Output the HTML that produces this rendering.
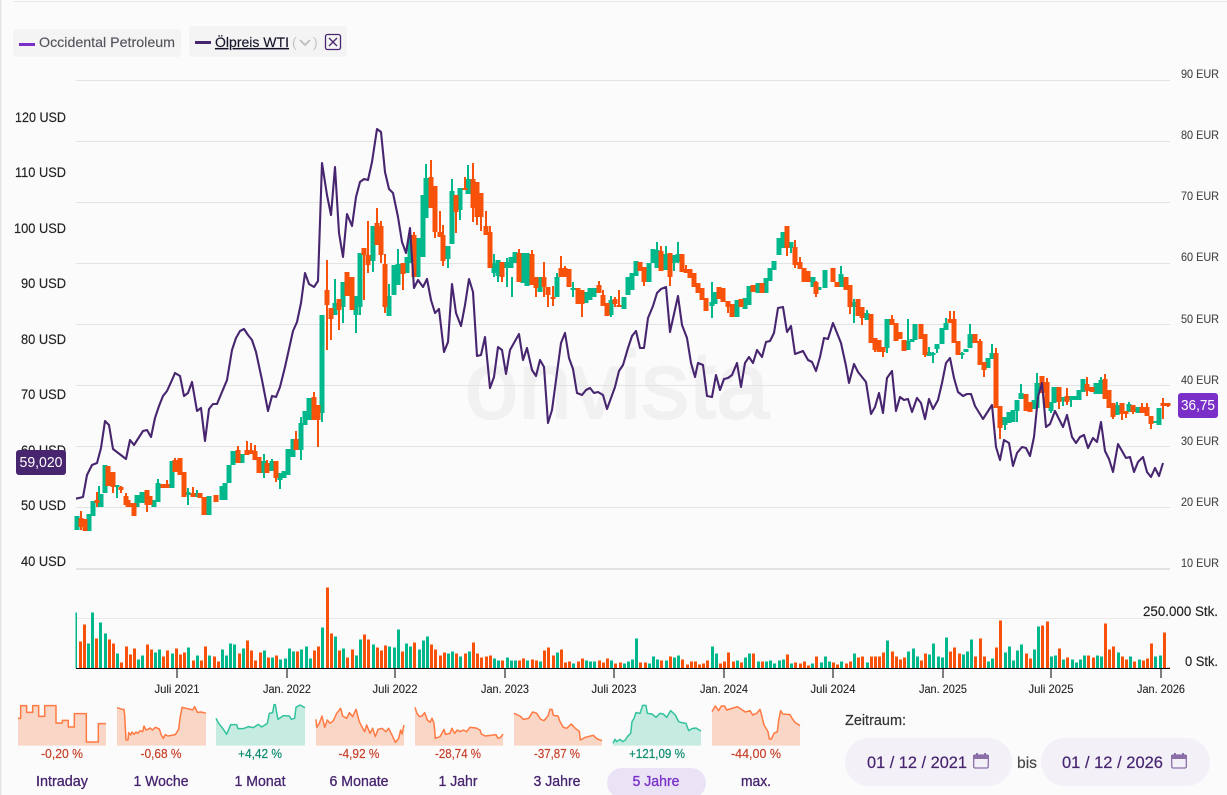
<!DOCTYPE html>
<html lang="de"><head><meta charset="utf-8"><title>Occidental Petroleum Chart</title>
<style>
html,body{margin:0;padding:0;background:#fbfbfb;width:1227px;height:795px;overflow:hidden}
svg{display:block;position:absolute;left:0;top:0}
text{font-family:"Liberation Sans",sans-serif}
.l{font-size:14px;fill:#222;stroke:#222;stroke-width:.15;text-anchor:end}
.r{font-size:12px;fill:#444;stroke:#444;stroke-width:.1}
.d{font-size:12px;fill:#222;stroke:#222;stroke-width:.1;text-anchor:middle}
.p{font-size:12.5px;text-anchor:middle;stroke-width:.2}
.n{font-size:14.5px;fill:#47256f;stroke:#47256f;stroke-width:.3;text-anchor:middle}
</style></head><body>
<svg width="1227" height="795" viewBox="0 0 1227 795" xmlns="http://www.w3.org/2000/svg">
<rect x="0" y="0" width="1227" height="795" fill="#fbfbfb"/>
<rect x="0" y="0" width="1.5" height="795" fill="#e4e4e4"/>
<rect x="13" y="1" width="1214" height="1" fill="#e8e8e8"/>

<!-- watermark -->
<text x="465" y="418" font-size="96" fill="#f1f1f1" stroke="#f1f1f1" stroke-width="2">onvista</text>

<!-- grid -->
<g fill="#e3e3e3">
<rect x="76" y="80" width="1094" height="1"/><rect x="76" y="141" width="1094" height="1"/><rect x="76" y="202" width="1094" height="1"/><rect x="76" y="263" width="1094" height="1"/><rect x="76" y="324" width="1094" height="1"/><rect x="76" y="385" width="1094" height="1"/><rect x="76" y="446" width="1094" height="1"/><rect x="76" y="507" width="1094" height="1"/><rect x="76" y="568" width="1094" height="2"/>
<rect x="76" y="618" width="1094" height="1" fill="#e8e8e8"/>
</g>

<!-- legend -->
<rect x="13" y="29" width="168" height="28" rx="3" fill="#f4f4f4"/>
<rect x="19" y="43" width="16" height="3" fill="#7a30c8"/>
<text x="39" y="47" font-size="14" fill="#55555f" stroke="#55555f" stroke-width=".15" textLength="136" lengthAdjust="spacingAndGlyphs">Occidental Petroleum</text>
<rect x="189" y="26" width="158" height="31" rx="3" fill="#f4f4f4"/>
<rect x="195" y="41" width="16" height="3" fill="#47256f"/>
<text x="215" y="47" font-size="14" fill="#14142a" stroke="#14142a" stroke-width=".15" text-decoration="underline" textLength="74" lengthAdjust="spacingAndGlyphs">Ölpreis WTI</text>
<text x="292" y="47" font-size="14" fill="#c4c4c4">(</text>
<path d="M300 40l5 5 5-5" fill="none" stroke="#bdbdbd" stroke-width="1.8"/>
<text x="313" y="47" font-size="14" fill="#c4c4c4">)</text>
<rect x="325.5" y="34.5" width="15" height="15" rx="2" fill="none" stroke="#47256f" stroke-width="1.3"/>
<path d="M329 38l8 8M337 38l-8 8" fill="none" stroke="#47256f" stroke-width="1.3"/>

<!-- y axis left -->
<text class="l" x="66" y="122" textLength="51" lengthAdjust="spacingAndGlyphs">120 USD</text>
<text class="l" x="66" y="177" textLength="51" lengthAdjust="spacingAndGlyphs">110 USD</text>
<text class="l" x="66" y="233" textLength="52" lengthAdjust="spacingAndGlyphs">100 USD</text>
<text class="l" x="66" y="288" textLength="45" lengthAdjust="spacingAndGlyphs">90 USD</text>
<text class="l" x="66" y="344" textLength="45" lengthAdjust="spacingAndGlyphs">80 USD</text>
<text class="l" x="66" y="399" textLength="45" lengthAdjust="spacingAndGlyphs">70 USD</text>
<text class="l" x="66" y="455" textLength="45" lengthAdjust="spacingAndGlyphs">60 USD</text>
<text class="l" x="66" y="510" textLength="45" lengthAdjust="spacingAndGlyphs">50 USD</text>
<text class="l" x="66" y="566" textLength="45" lengthAdjust="spacingAndGlyphs">40 USD</text>

<!-- y axis right -->
<text class="r" x="1181" y="78" textLength="38" lengthAdjust="spacingAndGlyphs">90 EUR</text>
<text class="r" x="1181" y="139" textLength="38" lengthAdjust="spacingAndGlyphs">80 EUR</text>
<text class="r" x="1181" y="200" textLength="38" lengthAdjust="spacingAndGlyphs">70 EUR</text>
<text class="r" x="1181" y="261" textLength="38" lengthAdjust="spacingAndGlyphs">60 EUR</text>
<text class="r" x="1181" y="323" textLength="38" lengthAdjust="spacingAndGlyphs">50 EUR</text>
<text class="r" x="1181" y="384" textLength="38" lengthAdjust="spacingAndGlyphs">40 EUR</text>
<text class="r" x="1181" y="445" textLength="38" lengthAdjust="spacingAndGlyphs">30 EUR</text>
<text class="r" x="1181" y="506" textLength="38" lengthAdjust="spacingAndGlyphs">20 EUR</text>
<text class="r" x="1181" y="567" textLength="38" lengthAdjust="spacingAndGlyphs">10 EUR</text>

<!-- green candles -->
<g fill="none" stroke="#00b88c" shape-rendering="crispEdges">
<path stroke-width="2" d="M99 486V507M117 485V498M158 479V502M188 488V505M197 490V497M264 454V478M272 459V471M280 473V489M301 417V460M322 315V422M335 279V315M343 282V323M356 296V333M360 253V315M373 226V272M389 284V316M398 249V285M426 164V218M448 246V268M452 179V244M460 188V220M468 165V194M494 254V277M498 260V282M507 258V287M512 277V297M557 273V297M573 282V297M611 296V317M657 242V268M666 246V270M674 255V271M678 242V263M712 282V318M791 242V253M841 266V287M854 299V323M867 310V320M887 319V353M908 319V350M929 347V356M933 352V363M937 344V353M946 318V330M962 352V359M970 324V348M992 344V359M1005 417V430M1017 400V422M1021 384V399M1037 373V408M1051 402V413M1063 397V406M1071 396V407M1101 377V394M1117 402V415M1129 402V412"/>
<path stroke-width="5" d="M77 516V530M89 514V531M93 501V516M101 494V507M105 465V493M117 485V487M137 495V507M142 492V503M154 500V507M158 483V502M172 461V488M188 492V495M197 493V497M209 496V515M222 486V500M225 483V500M229 465V483M233 451V465M242 454V463M264 461V473M272 461V471M280 473V480M284 471V478M288 449V475M293 439V457M301 423V450M305 411V425M309 398V420M322 315V413M335 303V315M343 282V307M356 296V315M360 253V307M373 226V261M389 296V316M394 265V295M398 264V285M407 257V273M410 236V263M418 238V277M423 195V257M426 178V218M448 246V259M452 191V244M460 188V210M468 179V194M494 263V273M498 260V276M507 262V268M511 257V268M515 252V263M523 253V283M527 253V286M540 277V292M557 277V297M573 288V290M586 292V303M590 288V300M594 288V297M611 300V315M624 297V309M628 277V295M632 273V290M636 261V276M649 263V282M653 249V263M657 250V268M666 254V270M674 255V263M678 254V262M712 302V306M715 292V304M737 300V317M745 298V309M749 286V305M758 283V293M766 278V293M770 268V281M774 261V270M779 238V255M783 232V248M791 242V248M813 277V287M819 287V290M825 270V288M841 274V287M854 302V307M867 313V320M887 319V348M908 341V350M912 339V342M915 324V340M929 352V356M933 353V355M937 344V349M942 328V344M946 323V330M962 353V355M966 349V352M970 334V348M988 358V368M992 353V359M1005 417V425M1009 412V423M1013 410V422M1017 400V411M1021 393V399M1034 400V409M1037 383V408M1051 402V411M1054 387V403M1063 397V401M1071 396V400M1075 396V400M1079 390V400M1083 379V392M1096 383V394M1101 380V394M1117 405V415M1129 404V412M1138 407V413M1155 421V423M1159 408V425"/>
</g>

<!-- orange candles -->
<g fill="none" stroke="#f8520a" shape-rendering="crispEdges">
<path stroke-width="2" d="M81 511V530M97 492V507M113 472V493M121 486V493M126 493V505M147 490V512M167 480V488M175 458V472M193 487V497M238 446V463M247 441V455M251 443V454M255 445V460M267 460V473M276 461V482M296 431V450M314 392V420M318 405V447M327 260V350M331 308V340M339 299V330M364 248V300M368 221V273M377 208V245M381 221V263M385 254V313M403 263V290M414 232V277M431 160V208M435 186V238M440 211V237M443 225V266M456 195V233M465 177V190M473 163V222M477 182V225M481 193V231M486 211V235M490 226V268M502 262V282M519 249V282M532 250V285M536 277V297M544 262V297M548 287V307M553 286V306M561 256V277M565 266V277M582 290V317M599 281V293M603 290V306M615 297V307M619 290V307M640 262V271M644 267V286M661 246V271M670 253V286M686 265V273M728 301V313M787 226V256M795 240V268M800 257V269M816 281V297M850 285V314M862 307V325M875 338V352M883 347V357M892 315V325M921 324V339M925 334V357M950 311V323M954 311V343M980 339V365M984 362V377M996 348V408M1000 406V439M1047 378V408M1059 387V409M1067 388V405M1087 377V396M1105 374V399M1113 403V419M1122 403V420M1126 411V418M1133 405V414M1142 403V413M1147 403V416M1151 416V429M1163 398V419M1168 403V407"/>
<path stroke-width="5" d="M81 518V527M85 519V531M97 500V503M108 466V486M113 472V487M121 487V490M126 496V505M128 500V507M132 503V507M134 503V516M147 490V505M150 496V505M163 484V488M167 484V488M175 460V472M180 458V475M184 472V497M193 493V497M200 493V498M204 497V515M216 495V502M238 450V463M247 450V455M251 450V454M255 451V460M259 457V473M267 463V473M276 461V478M296 439V450M314 397V420M318 405V420M327 290V305M331 308V319M339 299V310M347 272V296M352 277V310M364 248V255M368 255V265M377 223V245M381 226V255M385 264V307M403 263V274M414 235V277M431 177V208M435 186V232M440 232V237M443 235V261M456 195V212M465 188V190M473 179V208M477 182V217M481 193V217M486 226V235M490 232V268M502 262V277M519 253V282M532 254V285M536 277V288M544 277V287M548 287V295M553 297V299M561 268V277M565 268V277M569 269V287M578 288V304M582 290V304M599 285V293M603 295V306M607 303V316M615 299V304M619 305V307M640 262V271M644 267V282M661 251V271M670 253V277M682 254V272M686 269V273M690 269V278M694 273V287M698 283V293M702 288V300M706 298V311M719 287V299M723 288V302M728 301V307M732 304V317M741 299V307M753 285V292M762 283V293M787 226V248M795 247V265M800 262V269M804 268V282M808 271V282M816 282V294M833 268V282M837 282V287M846 277V290M850 285V307M858 299V316M862 307V318M871 314V343M875 338V350M879 340V352M883 347V352M892 319V325M896 323V341M900 332V339M904 340V351M921 324V339M925 334V355M950 319V323M954 319V343M958 341V355M975 334V343M980 341V365M984 362V370M996 353V408M1000 406V428M1026 394V411M1030 402V412M1042 376V393M1047 382V408M1059 387V402M1067 396V402M1087 384V391M1092 387V392M1105 379V399M1109 390V408M1113 403V417M1122 403V414M1126 411V414M1133 405V412M1142 407V413M1147 407V416M1151 416V424M1163 403V406M1168 403V406"/>
</g>

<!-- oil line -->
<path fill="none" stroke="#47256f" stroke-width="2.1" stroke-linejoin="round" d="M76 498.7L83 497 87 475 92 465 97 463 101 448 105 421 109 425 113 449 126 459 130 440 134 445 143 431 147 430 151 437 155 418 159 406 163 396 167 391 172 380 175 373 180 376 184 396 188 393 192 382 197 411 201 408 205 441 209 409 213 404 217 404 227 380 232 350 236 338 240 331 244 329 248 335 252 340 256 352 262 380 268 411 272 396 276 397 280 387 285 367 293 331 297 322 301 303 305 273 309 284 314 287 318 281 322 163 327 195 331 215 335 167 339 233 343 257 347 214 352 226 356 197 360 182 364 179 368 180 372 162 377 129 381 132 385 172 389 189 393 193 398 217 402 242 406 253 410 228 414 288 418 280 423 287 427 279 431 300 435 313 439 309 444 352 448 342 452 284 456 313 461 326 465 305 469 279 473 292 477 356 481 355 485 337 490 388 494 377 498 347 502 350 506 374 510 350 519 334 523 360 527 348 532 370 536 376 540 360 544 367 548 423 552 410 561 343 565 333 569 358 573 369 577 393 582 395 586 390 590 388 594 393 598 392 603 395 607 409 615 387 619 371 623 365 628 348 632 336 636 331 640 348 644 348 648 318 653 306 657 293 661 289 666 287 670 332 678 296 682 325 687 338 691 363 695 377 698 363 703 365 707 396 712 397 716 375 720 390 724 379 728 378 732 375 737 363 741 387 745 363 749 357 753 363 757 350 762 357 766 342 770 341 774 333 778 308 783 307 787 332 791 326 795 354 803 351 808 360 812 362 816 371 820 357 824 338 828 339 833 323 837 333 841 343 846 366 849 383 854 364 858 372 862 377 866 382 871 414 875 407 879 393 883 413 887 378 892 371 896 411 900 397 904 400 908 399 912 412 917 398 921 403 925 419 929 399 933 409 938 400 942 383 946 363 950 358 954 378 958 392 963 396 967 394 971 394 975 406 983 419 992 405 996 447 1000 460 1004 440 1009 443 1013 466 1017 453 1022 447 1026 448 1030 456 1034 437 1038 397 1042 383 1046 427 1050 424 1055 411 1063 427 1067 415 1072 437 1076 443 1080 437 1084 435 1088 448 1093 438 1097 442 1101 422 1105 451 1109 459 1113 472 1118 444 1126 458 1130 457 1134 472 1138 462 1143 457 1147 472 1151 477 1155 468 1159 476 1163 463"/>

<!-- badges -->
<rect x="16" y="450" width="50" height="25" rx="3" fill="#47256f"/>
<text x="41" y="467" font-size="15" fill="#fff" text-anchor="middle" textLength="43" lengthAdjust="spacingAndGlyphs">59,020</text>
<rect x="1178" y="393" width="40" height="25" rx="3" fill="#7a30c8"/>
<text x="1198" y="410" font-size="15" fill="#fff" text-anchor="middle" textLength="34" lengthAdjust="spacingAndGlyphs">36,75</text>

<!-- volume -->
<g transform="translate(0,580) scale(.33333)" fill="none" stroke-width="9" shape-rendering="crispEdges">
<path stroke="#00b88c" d="M265 264V190M277 264V97M301 264V127M316 264V160M352 264V220M415 264V238M427 264V226M466 264V217M478 264V208M517 264V220M565 264V202M592 264V226M628 264V226M667 264V208M679 264V226M691 264V190M703 264V193M730 264V205M793 264V211M817 264V232M841 264V238M856 264V235M868 264V205M880 264V214M904 264V208M919 264V199M931 264V235M967 264V142M1006 264V169M1030 264V205M1069 264V226M1081 264V178M1120 264V193M1168 264V199M1183 264V202M1195 264V148M1219 264V190M1231 264V199M1258 264V208"/>
<path stroke="#f8520a" d="M241 264V184M253 264V133M289 264V175M328 264V178M340 264V190M364 264V247M379 264V199M391 264V223M403 264V205M442 264V193M454 264V208M490 264V229M502 264V211M529 264V205M541 264V223M553 264V217M580 264V241M604 264V241M616 264V199M643 264V229M655 264V244M718 264V220M742 264V181M754 264V211M766 264V241M781 264V217M805 264V232M829 264V226M892 264V214M943 264V211M955 264V199M982 264V22M994 264V160M1018 264V211M1042 264V232M1057 264V208M1093 264V163M1105 264V178M1132 264V202M1144 264V211M1156 264V196M1207 264V214M1243 264V187"/>
<path stroke="#00b88c" stroke-width="4" d="M229 264V97"/>
</g>
<g transform="translate(420,580) scale(.33333)" fill="none" stroke-width="9" shape-rendering="crispEdges">
<path stroke="#00b88c" d="M10 264V181M22 264V169M85 264V220M97 264V214M121 264V229M148 264V214M223 264V235M235 264V241M262 264V232M274 264V241M286 264V241M322 264V241M361 264V244M412 264V217M460 264V250M499 264V241M511 264V244M523 264V244M574 264V241M613 264V250M625 264V244M637 264V238M649 264V175M688 264V250M700 264V229M712 264V238M739 264V241M763 264V232M775 264V226M877 264V199M889 264V220M952 264V241M976 264V232M988 264V220M1015 264V244M1039 264V244M1051 264V241M1063 264V250M1078 264V241M1090 264V238M1114 264V250M1177 264V250"/>
<path stroke="#f8520a" d="M34 264V193M46 264V208M61 264V226M73 264V217M109 264V220M136 264V220M160 264V187M172 264V220M184 264V232M199 264V229M211 264V226M247 264V241M298 264V241M310 264V235M337 264V238M349 264V241M373 264V211M385 264V202M400 264V226M424 264V208M436 264V247M448 264V244M475 264V244M487 264V235M538 264V241M550 264V247M562 264V235M586 264V250M601 264V247M661 264V247M676 264V247M724 264V241M751 264V229M787 264V238M802 264V253M814 264V244M826 264V244M838 264V253M850 264V250M862 264V241M901 264V250M913 264V244M925 264V217M940 264V244M964 264V247M1000 264V220M1027 264V244M1102 264V223M1126 264V247M1141 264V250M1153 264V244M1165 264V256M1189 264V229"/>
</g>
<g transform="translate(820,580) scale(.33333)" fill="none" stroke-width="9" shape-rendering="crispEdges">
<path stroke="#00b88c" d="M4 264V247M16 264V229M28 264V244M64 264V244M103 264V220M142 264V247M202 264V181M265 264V214M280 264V205M292 264V229M328 264V223M340 264V190M355 264V229M367 264V232M379 264V172M430 264V223M442 264V214M454 264V178M505 264V244M517 264V235M556 264V217M568 264V199M580 264V241M592 264V211M604 264V193M643 264V208M655 264V139M694 264V229M706 264V226M730 264V238M757 264V238M769 264V247M781 264V238M793 264V226M832 264V226M844 264V229M895 264V217M931 264V229M958 264V238M1006 264V229M1021 264V226"/>
<path stroke="#f8520a" d="M40 264V247M52 264V253M79 264V250M91 264V244M115 264V232M127 264V229M154 264V229M166 264V229M178 264V229M190 264V217M217 264V214M229 264V229M241 264V238M253 264V232M304 264V241M316 264V220M391 264V214M403 264V202M418 264V220M466 264V229M481 264V175M493 264V229M529 264V202M541 264V121M619 264V220M631 264V235M667 264V136M682 264V124M718 264V205M742 264V232M805 264V226M820 264V232M856 264V130M868 264V208M880 264V199M907 264V229M919 264V238M943 264V244M970 264V241M982 264V235M994 264V190M1033 264V157M1045 264V262"/>
</g>

<!-- x axis -->
<rect x="76" y="668" width="1094" height="1" fill="#000"/>
<path d="M177 668V678M287 668V678M395 668V678M505 668V678M614 668V678M724 668V678M833 668V678M943 668V678M1051 668V678M1161 668V678" stroke="#000" stroke-width="1" fill="none" shape-rendering="crispEdges"/>
<text class="d" x="177" y="693" textLength="45" lengthAdjust="spacingAndGlyphs">Juli 2021</text>
<text class="d" x="287" y="693" textLength="48" lengthAdjust="spacingAndGlyphs">Jan. 2022</text>
<text class="d" x="395" y="693" textLength="45" lengthAdjust="spacingAndGlyphs">Juli 2022</text>
<text class="d" x="505" y="693" textLength="48" lengthAdjust="spacingAndGlyphs">Jan. 2023</text>
<text class="d" x="614" y="693" textLength="45" lengthAdjust="spacingAndGlyphs">Juli 2023</text>
<text class="d" x="724" y="693" textLength="48" lengthAdjust="spacingAndGlyphs">Jan. 2024</text>
<text class="d" x="833" y="693" textLength="45" lengthAdjust="spacingAndGlyphs">Juli 2024</text>
<text class="d" x="943" y="693" textLength="48" lengthAdjust="spacingAndGlyphs">Jan. 2025</text>
<text class="d" x="1051" y="693" textLength="45" lengthAdjust="spacingAndGlyphs">Juli 2025</text>
<text class="d" x="1161" y="693" textLength="48" lengthAdjust="spacingAndGlyphs">Jan. 2026</text>
<text x="1218" y="616" font-size="14" fill="#222" stroke="#222" stroke-width=".15" text-anchor="end" textLength="75" lengthAdjust="spacingAndGlyphs">250.000 Stk.</text>
<text x="1218" y="666" font-size="14" fill="#222" stroke="#222" stroke-width=".15" text-anchor="end" textLength="33" lengthAdjust="spacingAndGlyphs">0 Stk.</text>

<!-- sparklines -->
<g transform="translate(0,690) scale(.33333)" stroke-width="4.5" stroke-linejoin="round">
<polygon fill="#fad6c6" points="54,85 62,85 62,47 80,47 80,67 98,67 98,47 116,47 116,79 134,79 134,47 168,47 168,99 187,99 187,91 205,91 205,111 223,111 223,71 259,71 259,156 295,156 295,101 318,101 318,167 54,167"/>
<polyline fill="none" stroke="#ff7a42" points="54,85 62,85 62,47 80,47 80,67 98,67 98,47 116,47 116,79 134,79 134,47 168,47 168,99 187,99 187,91 205,91 205,111 223,111 223,71 259,71 259,156 295,156 295,101 318,101"/>
<polygon fill="#fad6c6" points="351,53 366,58 372,58 374,75 378,150 384,150 386,128 392,135 396,126 402,133 408,126 414,130 420,122 428,125 432,108 438,120 444,118 450,114 458,120 466,112 478,117 484,135 490,145 496,134 504,138 526,134 536,118 540,85 546,52 572,58 578,60 584,50 592,67 604,66 618,70 618,167 351,167"/>
<polyline fill="none" stroke="#ff7a42" points="351,53 366,58 372,58 374,75 378,150 384,150 386,128 392,135 396,126 402,133 408,126 414,130 420,122 428,125 432,108 438,120 444,118 450,114 458,120 466,112 478,117 484,135 490,145 496,134 504,138 526,134 536,118 540,85 546,52 572,58 578,60 584,50 592,67 604,66 618,70"/>
<polygon fill="#c6ece1" points="648,85 656,100 668,115 680,133 692,104 710,104 714,116 730,116 745,110 760,113 775,103 785,111 802,100 808,70 818,68 822,44 826,44 830,68 834,88 850,77 868,78 874,88 884,85 888,52 900,45 915,53 915,167 648,167"/>
<polyline fill="none" stroke="#33c29e" points="648,85 656,100 668,115 680,133 692,104 710,104 714,116 730,116 745,110 760,113 775,103 785,111 802,100 808,70 818,68 822,44 826,44 830,68 834,88 850,77 868,78 874,88 884,85 888,52 900,45 915,53"/>
<polygon fill="#fad6c6" points="948,88 950,112 958,100 966,78 974,112 982,90 990,100 1000,92 1010,70 1022,55 1028,78 1040,85 1048,68 1058,80 1068,58 1078,95 1088,115 1094,125 1100,105 1110,130 1118,115 1126,140 1134,118 1146,115 1158,125 1166,115 1176,135 1186,157 1196,145 1202,120 1206,132 1212,105 1212,167 948,167"/>
<polyline fill="none" stroke="#ff7a42" points="948,88 950,112 958,100 966,78 974,112 982,90 990,100 1000,92 1010,70 1022,55 1028,78 1040,85 1048,68 1058,80 1068,58 1078,95 1088,115 1094,125 1100,105 1110,130 1118,115 1126,140 1134,118 1146,115 1158,125 1166,115 1176,135 1186,157 1196,145 1202,120 1206,132 1212,105"/>
</g>
<g transform="translate(400,690) scale(.33333)" stroke-width="4.5" stroke-linejoin="round">
<polygon fill="#fad6c6" points="45,52 50,68 58,80 66,78 74,68 82,90 90,97 96,85 102,100 106,145 120,140 132,118 136,133 150,130 156,115 164,130 172,120 180,125 190,120 200,125 210,112 228,114 240,120 244,132 256,138 272,136 288,134 294,145 302,142 309,132 309,167 45,167"/>
<polyline fill="none" stroke="#ff7a42" points="45,52 50,68 58,80 66,78 74,68 82,90 90,97 96,85 102,100 106,145 120,140 132,118 136,133 150,130 156,115 164,130 172,120 180,125 190,120 200,125 210,112 228,114 240,120 244,132 256,138 272,136 288,134 294,145 302,142 309,132"/>
<polygon fill="#fad6c6" points="342,70 360,78 370,88 386,85 398,66 410,70 422,88 432,92 444,78 450,58 456,58 460,76 474,78 480,95 490,112 500,115 514,102 526,115 538,124 541,150 556,142 580,136 590,146 606,152 606,167 342,167"/>
<polyline fill="none" stroke="#ff7a42" points="342,70 360,78 370,88 386,85 398,66 410,70 422,88 432,92 444,78 450,58 456,58 460,76 474,78 480,95 490,112 500,115 514,102 526,115 538,124 541,150 556,142 580,136 590,146 606,152"/>
<polygon fill="#c6ece1" points="639,160 645,148 650,155 660,148 668,155 676,150 682,140 692,130 696,95 702,85 708,68 720,70 728,46 738,46 742,70 756,72 768,82 780,70 790,72 800,82 812,62 826,75 836,95 846,98 858,100 866,122 876,116 888,114 903,123 903,167 639,167"/>
<polyline fill="none" stroke="#33c29e" points="639,160 645,148 650,155 660,148 668,155 676,150 682,140 692,130 696,95 702,85 708,68 720,70 728,46 738,46 742,70 756,72 768,82 780,70 790,72 800,82 812,62 826,75 836,95 846,98 858,100 866,122 876,116 888,114 903,123"/>
<polygon fill="#fad6c6" points="936,65 946,48 956,62 964,48 974,48 980,60 1000,54 1012,50 1024,58 1036,66 1050,62 1058,75 1070,70 1080,58 1086,80 1092,105 1104,125 1108,147 1114,147 1122,130 1132,125 1136,90 1142,62 1148,72 1170,74 1178,88 1186,98 1200,107 1200,167 936,167"/>
<polyline fill="none" stroke="#ff7a42" points="936,65 946,48 956,62 964,48 974,48 980,60 1000,54 1012,50 1024,58 1036,66 1050,62 1058,75 1070,70 1080,58 1086,80 1092,105 1104,125 1108,147 1114,147 1122,130 1132,125 1136,90 1142,62 1148,72 1170,74 1178,88 1186,98 1200,107"/>
</g>

<g fill="#c8402a" stroke="#c8402a">
<text class="p" x="62" y="758" textLength="42" lengthAdjust="spacingAndGlyphs">-0,20 %</text>
<text class="p" x="161" y="758" textLength="41" lengthAdjust="spacingAndGlyphs">-0,68 %</text>
<text class="p" x="359" y="758" textLength="41" lengthAdjust="spacingAndGlyphs">-4,92 %</text>
<text class="p" x="458" y="758" textLength="46" lengthAdjust="spacingAndGlyphs">-28,74 %</text>
<text class="p" x="557" y="758" textLength="46" lengthAdjust="spacingAndGlyphs">-37,87 %</text>
<text class="p" x="756" y="758" textLength="50" lengthAdjust="spacingAndGlyphs">-44,00 %</text>
</g>
<g fill="#0a8a6e" stroke="#0a8a6e">
<text class="p" x="260" y="758" textLength="44" lengthAdjust="spacingAndGlyphs">+4,42 %</text>
<text class="p" x="657" y="758" textLength="56" lengthAdjust="spacingAndGlyphs">+121,09 %</text>
</g>

<rect x="607" y="768" width="99" height="30" rx="15" fill="#e9e3f5"/>
<text class="n" x="62" y="786" textLength="52" lengthAdjust="spacingAndGlyphs">Intraday</text>
<text class="n" x="161" y="786" textLength="55" lengthAdjust="spacingAndGlyphs">1 Woche</text>
<text class="n" x="260" y="786" textLength="51" lengthAdjust="spacingAndGlyphs">1 Monat</text>
<text class="n" x="359" y="786" textLength="59" lengthAdjust="spacingAndGlyphs">6 Monate</text>
<text class="n" x="458" y="786" textLength="39" lengthAdjust="spacingAndGlyphs">1 Jahr</text>
<text class="n" x="557" y="786" textLength="47" lengthAdjust="spacingAndGlyphs">3 Jahre</text>
<text class="n" x="656" y="786" textLength="47" lengthAdjust="spacingAndGlyphs" style="fill:#7a30c8;stroke:#7a30c8">5 Jahre</text>
<text class="n" x="756" y="786" textLength="30" lengthAdjust="spacingAndGlyphs">max.</text>

<!-- date range -->
<text x="845" y="725" font-size="15" fill="#333" stroke="#333" stroke-width=".2" textLength="61" lengthAdjust="spacingAndGlyphs">Zeitraum:</text>
<rect x="845" y="738" width="167" height="48" rx="24" fill="#f3f0f8"/>
<rect x="1041" y="738" width="169" height="48" rx="24" fill="#f3f0f8"/>
<text x="867" y="768" font-size="17" fill="#47256f" stroke="#47256f" stroke-width=".2" textLength="100" lengthAdjust="spacingAndGlyphs">01 / 12 / 2021</text>
<text x="1062" y="768" font-size="17" fill="#47256f" stroke="#47256f" stroke-width=".2" textLength="101" lengthAdjust="spacingAndGlyphs">01 / 12 / 2026</text>
<text x="1017" y="768" font-size="16" fill="#444" stroke="#444" stroke-width=".15" textLength="20" lengthAdjust="spacingAndGlyphs">bis</text>
<g fill="none" stroke="#8a6fa8" stroke-width="1.3">
<rect x="973.7" y="755" width="14.6" height="13" rx="1.5"/>
<rect x="1171.7" y="755" width="14.6" height="13" rx="1.5"/>
</g>
<g fill="#8a6fa8">
<rect x="973" y="755" width="16" height="4"/><rect x="976" y="753" width="2" height="3"/><rect x="984" y="753" width="2" height="3"/>
<rect x="1171" y="755" width="16" height="4"/><rect x="1174" y="753" width="2" height="3"/><rect x="1182" y="753" width="2" height="3"/>
</g>
</svg>
</body></html>
